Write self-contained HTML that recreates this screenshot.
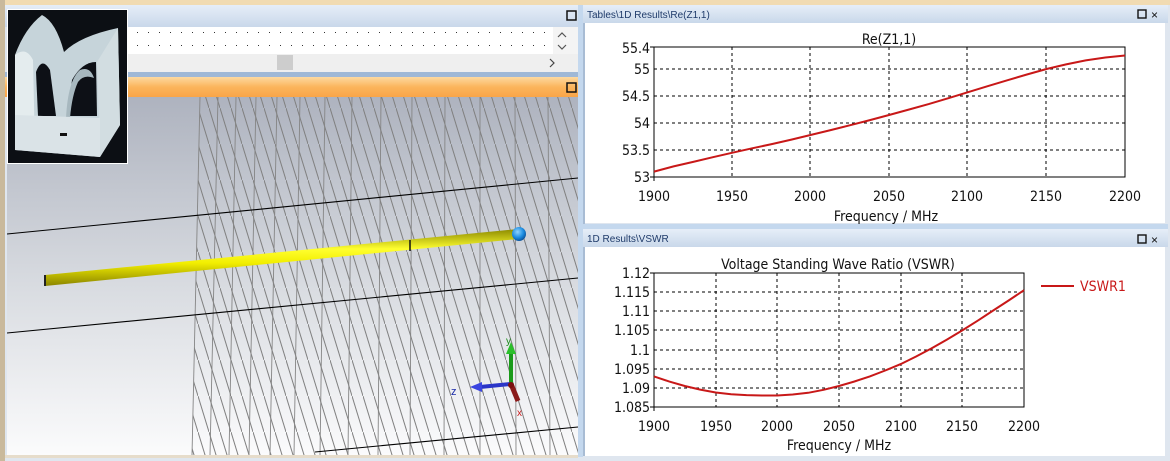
<!DOCTYPE html>
<html><head><meta charset="utf-8"><style>
html,body{margin:0;padding:0;width:1170px;height:461px;overflow:hidden;background:#dfe6ef;font-family:"Liberation Sans",sans-serif}
svg{display:block}
</style></head><body>
<svg width="1170" height="461" xmlns="http://www.w3.org/2000/svg" font-family="Liberation Sans, sans-serif">
<defs>
<linearGradient id="hdr" x1="0" y1="0" x2="0" y2="1"><stop offset="0" stop-color="#e6eef8"/><stop offset="1" stop-color="#c9d8ea"/></linearGradient>
<linearGradient id="org" x1="0" y1="0" x2="0" y2="1"><stop offset="0" stop-color="#fdd9a0"/><stop offset="0.5" stop-color="#fbb55c"/><stop offset="1" stop-color="#f9a548"/></linearGradient>
<linearGradient id="bg3" x1="0" y1="0" x2="0" y2="1"><stop offset="0" stop-color="#aeb3bf"/><stop offset="0.55" stop-color="#dadde2"/><stop offset="1" stop-color="#fbfbfc"/></linearGradient>
<linearGradient id="rod" x1="0" y1="0" x2="0" y2="1"><stop offset="0" stop-color="#8c8a00"/><stop offset="0.35" stop-color="#ffff30"/><stop offset="0.6" stop-color="#f2ee00"/><stop offset="1" stop-color="#8a8400"/></linearGradient>
<radialGradient id="ball" cx="0.4" cy="0.35" r="0.7"><stop offset="0" stop-color="#8fd4ff"/><stop offset="0.6" stop-color="#1a8be0"/><stop offset="1" stop-color="#0a4a90"/></radialGradient>
<pattern id="mesh" width="11" height="36" patternUnits="userSpaceOnUse">
<line x1="0" y1="0" x2="11" y2="36" stroke="#808080" stroke-width="1"/>
</pattern>
<pattern id="dots" width="11" height="13" patternUnits="userSpaceOnUse"><rect x="5" y="6" width="1" height="1" fill="#333"/></pattern>
<clipPath id="c3"><rect x="7" y="97" width="571" height="358"/></clipPath>
</defs>
<rect x="0" y="0" width="1170" height="461" fill="#dfe6ef"/>
<rect x="0" y="0" width="1170" height="5" fill="#f1dbb2"/>
<rect x="0" y="0" width="5" height="461" fill="#c9b99c"/>
<rect x="5" y="455" width="573" height="3" fill="#e6dccb"/>
<rect x="578" y="5" width="5" height="452" fill="#c4d8ee"/>
<rect x="5" y="5" width="573" height="22" fill="url(#hdr)"/>
<rect x="567" y="11" width="9" height="9" fill="none" stroke="#111" stroke-width="1.5"/>
<rect x="7" y="27" width="546" height="27" fill="#fff"/>
<rect x="7" y="27" width="546" height="27" fill="url(#dots)"/>
<rect x="553" y="27" width="25" height="27" fill="#f4f4f4"/>
<path d="M558 37 l4 -4 l4 4" fill="none" stroke="#555" stroke-width="1.2"/>
<path d="M558 45 l4 4 l4 -4" fill="none" stroke="#555" stroke-width="1.2"/>
<rect x="7" y="54" width="571" height="18" fill="#efefef"/>
<rect x="277" y="55" width="16" height="15" fill="#cdcdcd"/>
<path d="M550 59 l4 4 l-4 4" fill="none" stroke="#444" stroke-width="1.2"/>
<rect x="5" y="72" width="573" height="5" fill="#9fb8d6"/>
<rect x="5" y="77" width="573" height="20" fill="url(#org)"/>
<rect x="567" y="83" width="9" height="9" fill="none" stroke="#111" stroke-width="1.5"/>
<rect x="7" y="97" width="571" height="358" fill="url(#bg3)"/>
<g clip-path="url(#c3)">
<polygon points="200,97 578,97 578,455 192,455" fill="url(#mesh)"/>
<g stroke="#858585" stroke-width="0.9">
<line x1="200" y1="97" x2="192" y2="455"/><line x1="218" y1="97" x2="210" y2="455"/><line x1="236" y1="97" x2="229" y2="455"/><line x1="256" y1="97" x2="249" y2="455"/><line x1="277" y1="97" x2="270" y2="455"/><line x1="300" y1="97" x2="294" y2="455"/><line x1="325" y1="97" x2="320" y2="455"/><line x1="352" y1="97" x2="348" y2="455"/><line x1="381" y1="97" x2="378" y2="455"/><line x1="412" y1="97" x2="410" y2="455"/><line x1="445" y1="97" x2="444" y2="455"/><line x1="480" y1="97" x2="480" y2="455"/><line x1="515" y1="97" x2="516" y2="455"/><line x1="548" y1="97" x2="550" y2="455"/>
</g>
<g stroke="#000" stroke-width="1.1">
<line x1="7" y1="234" x2="578" y2="178"/>
<line x1="7" y1="333" x2="578" y2="278"/>
<line x1="315" y1="452" x2="578" y2="427"/>
</g>
<polygon points="45,275 518,229 518,239 45,286" fill="url(#rod)"/>
<line x1="45" y1="275" x2="45" y2="286" stroke="#222" stroke-width="2"/>
<line x1="410" y1="240" x2="410" y2="251" stroke="#111" stroke-width="1.5"/>
<circle cx="519" cy="234" r="7" fill="url(#ball)"/>
<line x1="511" y1="384" x2="511" y2="352" stroke="#1a9a1a" stroke-width="4"/>
<polygon points="506,354 516,354 511,342" fill="#2bbf2b"/>
<line x1="510" y1="384" x2="480" y2="387" stroke="#2a35c8" stroke-width="4"/>
<polygon points="482,382 482,392 470,387" fill="#3a45e0"/>
<line x1="511" y1="384" x2="518" y2="401" stroke="#8a1a1a" stroke-width="5"/>
<circle cx="511" cy="385" r="3" fill="#7a1010"/>
<text x="506" y="344" font-size="10" fill="#1a8a1a">y</text>
<text x="451" y="395" font-size="11" fill="#1a2aa8">z</text>
<text x="517" y="416" font-size="10" fill="#c82020">x</text>
</g>
<!-- thumbnail -->
<rect x="7" y="9" width="121" height="155" fill="#fff"/>
<rect x="8" y="10" width="119" height="153" fill="#0c0f14"/>
<path d="M15 55 Q25 28 42 15 Q56 22 64 52 Q80 36 118 28 L120 125 L100 157 L15 150 Z" fill="#c6d4da"/>
<path d="M15 55 Q26 46 33 60 L35 150 L15 150 Z" fill="#e4ecee"/>
<path d="M97 62 L118 28 L120 125 L100 157 Z" fill="#d2dde1"/>
<path d="M36 72 Q42 56 50 70 L56 116 L38 116 Z" fill="#0d1016"/>
<path d="M68 116 L72 80 Q82 62 96 62 L97 116 Z" fill="#0d1016"/>
<path d="M66 118 Q68 80 80 70 Q90 66 94 78 Q84 74 78 82 Q72 95 70 118 Z" fill="#a7b8bf"/>
<path d="M15 115 L100 118 L100 157 L15 150 Z" fill="#dae3e7"/>
<rect x="60" y="133" width="7" height="3" fill="#111"/>
<!-- right panel 1 -->
<rect x="583" y="5" width="585" height="18" fill="url(#hdr)"/>
<text x="587" y="18" font-size="10" fill="#1f3b6a">Tables\1D Results\Re(Z1,1)</text>
<rect x="1138" y="10" width="8" height="8" fill="none" stroke="#111" stroke-width="1.4"/>
<text x="1151" y="19" font-size="12" fill="#111">×</text>
<rect x="585" y="23" width="580" height="200" fill="#fff"/>
<rect x="583" y="23" width="2" height="201" fill="#a8bcd4"/>
<g stroke="#000" stroke-width="1" stroke-dasharray="3,3">
<line x1="732" y1="47" x2="732" y2="177"/><line x1="810" y1="47" x2="810" y2="177"/><line x1="889" y1="47" x2="889" y2="177"/><line x1="967" y1="47" x2="967" y2="177"/><line x1="1046" y1="47" x2="1046" y2="177"/>
<line x1="654" y1="69" x2="1125" y2="69"/><line x1="654" y1="96" x2="1125" y2="96"/><line x1="654" y1="123" x2="1125" y2="123"/><line x1="654" y1="150" x2="1125" y2="150"/>
</g>
<rect x="654" y="47" width="471" height="130" fill="none" stroke="#000" stroke-width="1"/>
<g stroke="#000"><line x1="650" y1="47" x2="654" y2="47"/><line x1="650" y1="177" x2="654" y2="177"/><line x1="654" y1="177" x2="654" y2="181"/></g>
<polyline points="654,171.6 673.6,166.4 693.2,161.9 712.9,157.2 732.5,152.7 752.1,148.3 771.7,144.1 791.4,139.6 811,134.9 830.6,130.1 850.2,125.2 869.9,120.1 889.5,114.9 909.1,109.5 928.7,104.1 948.4,98.2 968,92.2 987.6,86.2 1007.2,80.3 1026.9,74.5 1046.5,69 1066.1,64.4 1085.7,60.4 1105.4,57.5 1125,55.5" fill="none" stroke="#c81818" stroke-width="2"/>
<g font-size="14" fill="#111" text-anchor="end" font-family="DejaVu Sans Condensed, Liberation Sans, sans-serif">
<text x="650" y="53">55.4</text><text x="650" y="74">55</text><text x="650" y="101">54.5</text><text x="650" y="128">54</text><text x="650" y="155">53.5</text><text x="650" y="182">53</text>
</g>
<g font-size="14" fill="#111" text-anchor="middle" font-family="DejaVu Sans Condensed, Liberation Sans, sans-serif">
<text x="654" y="201">1900</text><text x="732" y="201">1950</text><text x="810" y="201">2000</text><text x="889" y="201">2050</text><text x="967" y="201">2100</text><text x="1046" y="201">2150</text><text x="1125" y="201">2200</text>
<text x="886" y="221">Frequency / MHz</text>
<text x="889" y="44">Re(Z1,1)</text>
</g>
<!-- right panel 2 -->
<rect x="583" y="224" width="585" height="5" fill="#c4d8ee"/>
<rect x="583" y="229" width="585" height="18" fill="url(#hdr)"/>
<text x="587" y="242" font-size="10" fill="#1f3b6a">1D Results\VSWR</text>
<rect x="1138" y="235" width="8" height="8" fill="none" stroke="#111" stroke-width="1.4"/>
<text x="1151" y="244" font-size="12" fill="#111">×</text>
<rect x="585" y="247" width="580" height="209" fill="#fff"/>
<rect x="583" y="247" width="2" height="210" fill="#a8bcd4"/>
<rect x="583" y="456" width="585" height="5" fill="#dfe6ef"/>
<g stroke="#000" stroke-width="1" stroke-dasharray="3,3">
<line x1="716" y1="273" x2="716" y2="407"/><line x1="777" y1="273" x2="777" y2="407"/><line x1="839" y1="273" x2="839" y2="407"/><line x1="901" y1="273" x2="901" y2="407"/><line x1="962" y1="273" x2="962" y2="407"/>
<line x1="654" y1="292" x2="1024" y2="292"/><line x1="654" y1="311" x2="1024" y2="311"/><line x1="654" y1="330" x2="1024" y2="330"/><line x1="654" y1="350" x2="1024" y2="350"/><line x1="654" y1="369" x2="1024" y2="369"/><line x1="654" y1="388" x2="1024" y2="388"/>
</g>
<rect x="654" y="273" width="370" height="134" fill="none" stroke="#000" stroke-width="1"/>
<g stroke="#000"><line x1="650" y1="273" x2="654" y2="273"/><line x1="650" y1="407" x2="654" y2="407"/><line x1="654" y1="407" x2="654" y2="411"/></g>
<polyline points="654,376.4 669.4,381.6 684.8,386 700.2,389.6 715.7,392.5 731.1,394.2 746.5,395.1 761.9,395.5 777.3,395.5 792.7,394.5 808.2,392.8 823.6,389.8 839,386 854.4,381.5 869.8,376.4 885.2,370.5 900.7,364.1 916.1,356.5 931.5,348.4 946.9,339.6 962.3,330.4 977.7,320.7 993.2,310.5 1008.6,300.5 1024,290.2" fill="none" stroke="#c81818" stroke-width="2"/>
<line x1="1041" y1="286" x2="1074" y2="286" stroke="#c81818" stroke-width="2"/>
<text x="1080" y="291" font-size="14" fill="#c81818" font-family="DejaVu Sans Condensed, Liberation Sans, sans-serif">VSWR1</text>
<g font-size="14" fill="#111" text-anchor="end" font-family="DejaVu Sans Condensed, Liberation Sans, sans-serif">
<text x="650" y="278">1.12</text><text x="650" y="297">1.115</text><text x="650" y="316">1.11</text><text x="650" y="335">1.105</text><text x="650" y="355">1.1</text><text x="650" y="374">1.095</text><text x="650" y="393">1.09</text><text x="650" y="412">1.085</text>
</g>
<g font-size="14" fill="#111" text-anchor="middle" font-family="DejaVu Sans Condensed, Liberation Sans, sans-serif">
<text x="654" y="431">1900</text><text x="716" y="431">1950</text><text x="777" y="431">2000</text><text x="839" y="431">2050</text><text x="901" y="431">2100</text><text x="962" y="431">2150</text><text x="1024" y="431">2200</text>
<text x="839" y="450">Frequency / MHz</text>
<text x="838" y="269">Voltage Standing Wave Ratio (VSWR)</text>
</g>
</svg>
</body></html>
